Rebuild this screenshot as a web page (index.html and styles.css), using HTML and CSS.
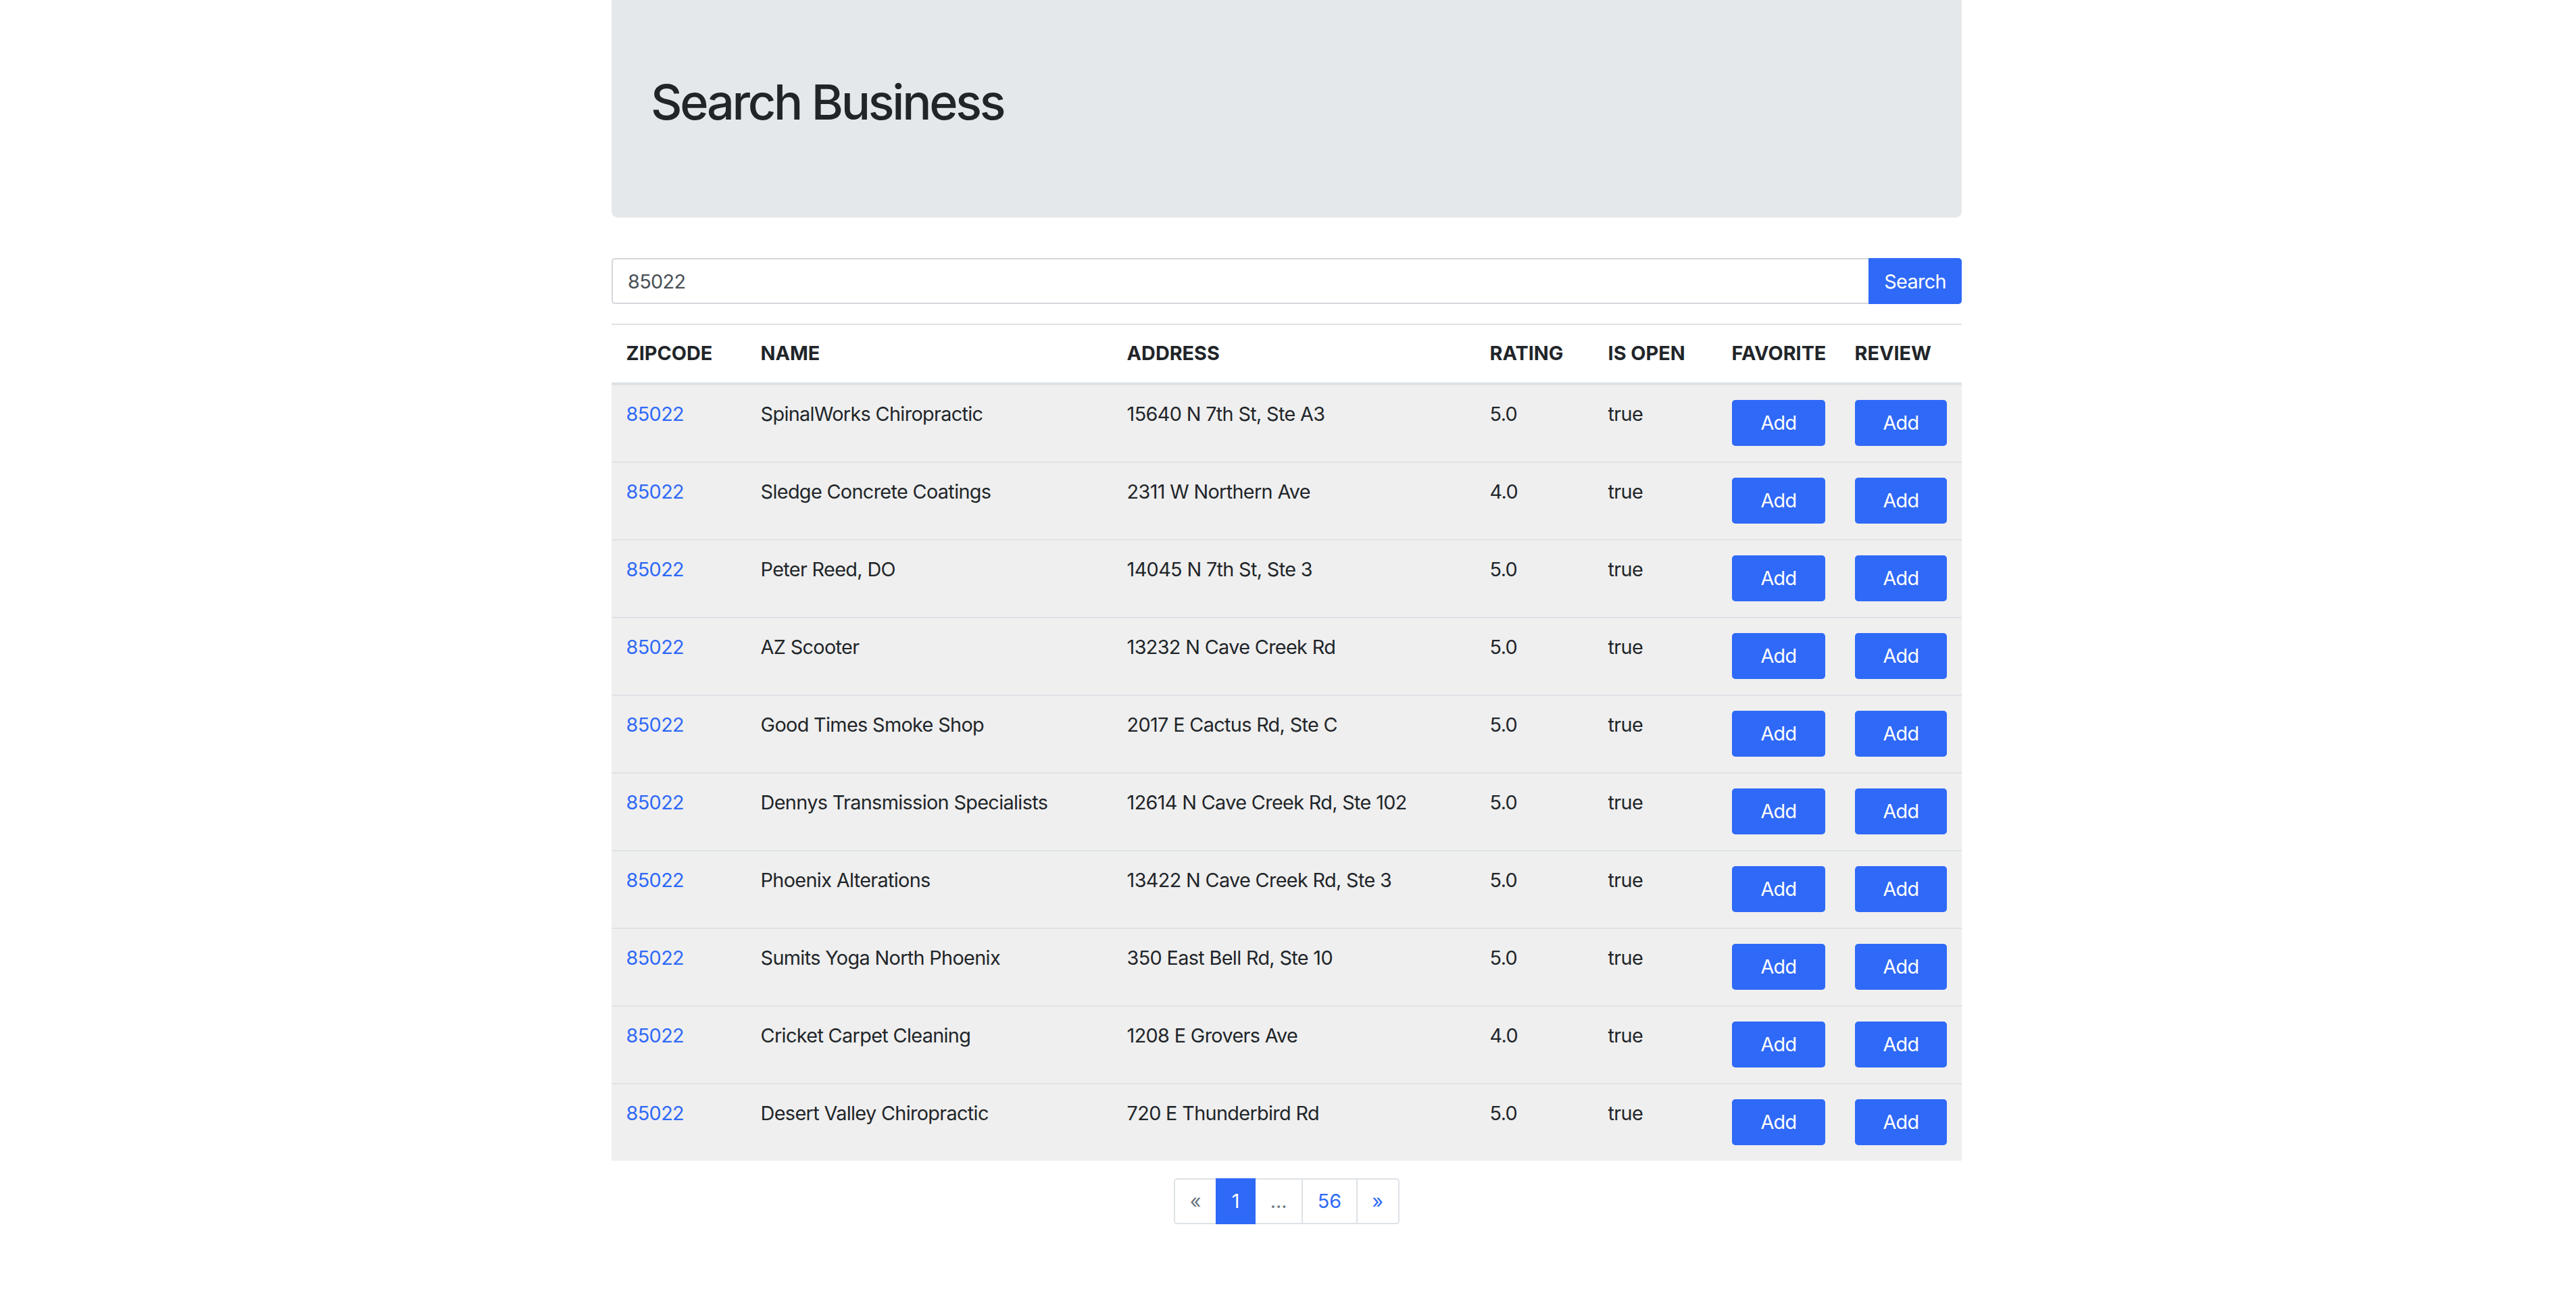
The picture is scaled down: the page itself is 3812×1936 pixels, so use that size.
FILE: index.html
```html
<!DOCTYPE html>
<html lang="en">
<head>
<meta charset="utf-8">
<title>Search Business</title>
<link rel="stylesheet" href="styles.css">
</head>
<body>
<div class="container">
  <header class="hero">
    <h1 class="hero-title">Search Business</h1>
  </header>

  <form class="search">
    <input class="search-input" type="text" value="85022">
    <button class="search-btn" type="button">Search</button>
  </form>

  <table class="results">
    <colgroup>
      <col class="c-zip"><col class="c-name"><col class="c-addr"><col class="c-rating"><col class="c-open"><col class="c-fav"><col class="c-rev">
    </colgroup>
    <thead>
      <tr><th>ZIPCODE</th><th>NAME</th><th>ADDRESS</th><th>RATING</th><th>IS OPEN</th><th>FAVORITE</th><th>REVIEW</th></tr>
    </thead>
    <tbody>
      <tr><td><a class="zip-link" href="#">85022</a></td><td>SpinalWorks Chiropractic</td><td>15640 N 7th St, Ste A3</td><td>5.0</td><td>true</td><td><button class="btn-add" type="button">Add</button></td><td><button class="btn-add" type="button">Add</button></td></tr>
      <tr><td><a class="zip-link" href="#">85022</a></td><td>Sledge Concrete Coatings</td><td>2311 W Northern Ave</td><td>4.0</td><td>true</td><td><button class="btn-add" type="button">Add</button></td><td><button class="btn-add" type="button">Add</button></td></tr>
      <tr><td><a class="zip-link" href="#">85022</a></td><td>Peter Reed, DO</td><td>14045 N 7th St, Ste 3</td><td>5.0</td><td>true</td><td><button class="btn-add" type="button">Add</button></td><td><button class="btn-add" type="button">Add</button></td></tr>
      <tr><td><a class="zip-link" href="#">85022</a></td><td>AZ Scooter</td><td>13232 N Cave Creek Rd</td><td>5.0</td><td>true</td><td><button class="btn-add" type="button">Add</button></td><td><button class="btn-add" type="button">Add</button></td></tr>
      <tr><td><a class="zip-link" href="#">85022</a></td><td>Good Times Smoke Shop</td><td>2017 E Cactus Rd, Ste C</td><td>5.0</td><td>true</td><td><button class="btn-add" type="button">Add</button></td><td><button class="btn-add" type="button">Add</button></td></tr>
      <tr><td><a class="zip-link" href="#">85022</a></td><td>Dennys Transmission Specialists</td><td>12614 N Cave Creek Rd, Ste 102</td><td>5.0</td><td>true</td><td><button class="btn-add" type="button">Add</button></td><td><button class="btn-add" type="button">Add</button></td></tr>
      <tr><td><a class="zip-link" href="#">85022</a></td><td>Phoenix Alterations</td><td>13422 N Cave Creek Rd, Ste 3</td><td>5.0</td><td>true</td><td><button class="btn-add" type="button">Add</button></td><td><button class="btn-add" type="button">Add</button></td></tr>
      <tr><td><a class="zip-link" href="#">85022</a></td><td>Sumits Yoga North Phoenix</td><td>350 East Bell Rd, Ste 10</td><td>5.0</td><td>true</td><td><button class="btn-add" type="button">Add</button></td><td><button class="btn-add" type="button">Add</button></td></tr>
      <tr><td><a class="zip-link" href="#">85022</a></td><td>Cricket Carpet Cleaning</td><td>1208 E Grovers Ave</td><td>4.0</td><td>true</td><td><button class="btn-add" type="button">Add</button></td><td><button class="btn-add" type="button">Add</button></td></tr>
      <tr><td><a class="zip-link" href="#">85022</a></td><td>Desert Valley Chiropractic</td><td>720 E Thunderbird Rd</td><td>5.0</td><td>true</td><td><button class="btn-add" type="button">Add</button></td><td><button class="btn-add" type="button">Add</button></td></tr>
    </tbody>
  </table>

  <nav class="pager-wrap">
    <ul class="pager">
      <li class="page page-first page-disabled">«</li>
      <li class="page page-active">1</li>
      <li class="page page-disabled">...</li>
      <li class="page page-link">56</li>
      <li class="page page-last page-link">»</li>
    </ul>
  </nav>
</div>
</body>
</html>
```

FILE: styles.css
```css
* {
  box-sizing: border-box;
}

body {
  margin: 0;
  background: #ffffff;
  color: #212529;
  font-family: Inter, "Noto Sans", "Liberation Sans", sans-serif;
  font-size: 28.8px;
  line-height: 1.5;
  letter-spacing: -0.65px;
}

.container {
  width: 1998px;
  margin-left: calc(50% - 1001px);
}

.hero {
  background: #e5e8eb;
  border-radius: 0 0 9px 9px;
  padding: 108px 58px 114px;
  margin-bottom: 60px;
}

.hero-title {
  margin: 0 0 14px;
  font-size: 72px;
  font-weight: 500;
  line-height: 1.2;
  letter-spacing: -3.3px;
}

.search {
  display: flex;
  height: 68px;
  margin: 0 0 29px;
}

.search-input {
  flex: 1;
  min-width: 0;
  height: 68px;
  border: 2px solid #d4d8dc;
  border-right: none;
  border-radius: 5px 0 0 5px;
  padding: 0 22px;
  font: inherit;
  letter-spacing: inherit;
  color: #495057;
  background: #fff;
  outline: none;
}

.search-btn {
  width: 138px;
  height: 68px;
  border: none;
  border-radius: 0 5px 5px 0;
  background: #2f69f7;
  color: #ffffff;
  font: inherit;
  letter-spacing: inherit;
  padding: 0;
}

.results {
  width: 100%;
  border-collapse: collapse;
  table-layout: fixed;
}

.c-zip { width: 199px; }
.c-name { width: 542px; }
.c-addr { width: 537px; }
.c-rating { width: 175px; }
.c-open { width: 183px; }
.c-fav { width: 182px; }
.c-rev { width: 180px; }

.results th,
.results td {
  text-align: left;
  padding: 21px 21.6px 24px;
  border-top: 2px solid #dee2e6;
  vertical-align: top;
  white-space: nowrap;
}

.results th {
  vertical-align: bottom;
  font-weight: 700;
  letter-spacing: 0;
  padding-top: 20px;
  padding-bottom: 21px;
  border-bottom: 4px solid #dee2e6;
}

.results td {
  background: #efefef;
}

.results td:nth-child(6),
.results td:nth-child(7) {
  padding-top: 22px;
  padding-bottom: 23px;
}

.zip-link {
  color: #2f69f7;
  text-decoration: none;
}

.btn-add {
  display: block;
  width: 100%;
  height: 68px;
  border: none;
  border-radius: 5px;
  background: #2f69f7;
  color: #ffffff;
  font: inherit;
  letter-spacing: inherit;
  padding: 0;
}

.pager-wrap {
  display: flex;
  justify-content: center;
  margin-top: 26px;
}

.pager {
  display: flex;
  list-style: none;
  margin: 0;
  padding: 0;
  letter-spacing: 0;
}

.page {
  padding: 14px 21.6px;
  line-height: 36px;
  border: 2px solid #dee2e6;
  margin-left: -2px;
  background: #fff;
}

.page-first {
  margin-left: 0;
  border-radius: 5px 0 0 5px;
}

.page-last {
  border-radius: 0 5px 5px 0;
}

.page-disabled {
  color: #6c757d;
}

.page-link {
  color: #2f69f7;
}

.page-active {
  background: #2f69f7;
  border-color: #2f69f7;
  color: #ffffff;
  position: relative;
}
```
